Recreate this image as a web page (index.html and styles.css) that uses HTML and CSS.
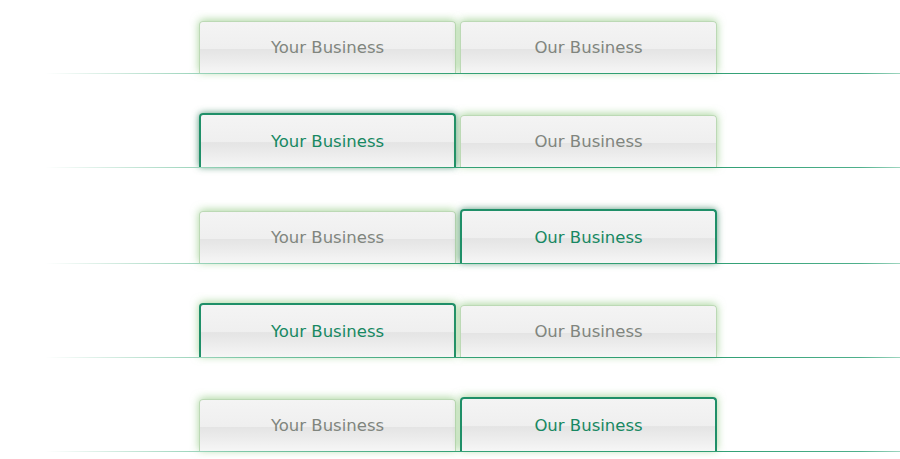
FILE: index.html
```html
<!DOCTYPE html>
<html>
<head>
<meta charset="utf-8">
<link rel="stylesheet" href="styles.css">
</head>
<body>
<div class="stack">
  <div class="row row-first">
    <div class="tabs">
      <div class="tab">Your Business</div>
      <div class="tab">Our Business</div>
    </div>
    <div class="rule"></div>
  </div>
  <div class="row row-a">
    <div class="tabs">
      <div class="tab active dark">Your Business</div>
      <div class="tab">Our Business</div>
    </div>
    <div class="rule"></div>
  </div>
  <div class="row row-b">
    <div class="tabs">
      <div class="tab">Your Business</div>
      <div class="tab active dark">Our Business</div>
    </div>
    <div class="rule"></div>
  </div>
  <div class="row row-a">
    <div class="tabs">
      <div class="tab active light">Your Business</div>
      <div class="tab">Our Business</div>
    </div>
    <div class="rule"></div>
  </div>
  <div class="row row-a">
    <div class="tabs">
      <div class="tab">Your Business</div>
      <div class="tab active light">Our Business</div>
    </div>
    <div class="rule"></div>
  </div>
</div>
</body>
</html>
```
FILE: styles.css
```css
html, body {
  margin: 0;
  padding: 0;
  background: #ffffff;
}
body {
  width: 900px;
  height: 459px;
  overflow: hidden;
  font-family: "DejaVu Sans", "Liberation Sans", sans-serif;
}
.stack {
  display: flex;
  flex-direction: column;
}
.row {
  display: flex;
  flex-direction: column;
  justify-content: flex-end;
}
.row-first { height: 74px; }
.row-a { height: 94px; }
.row-b { height: 96px; }
.tabs {
  display: flex;
  align-items: flex-end;
  gap: 4px;
  padding-left: 199px;
  height: 54px;
}
.tab {
  box-sizing: border-box;
  width: 257px;
  height: 52px;
  padding-top: 1px;
  border: 1px solid #bcd9b5;
  border-bottom: none;
  border-radius: 4px 4px 0 0;
  background: linear-gradient(to bottom, #f4f4f4 0%, #efefef 52%, #e4e4e4 53%, #ececec 75%, #f6f6f6 100%);
  box-shadow: 0 -1px 8px rgba(110, 185, 90, 0.6);
  color: #80857e;
  font-size: 16.5px;
  text-align: center;
  line-height: 50px;
}
.tab.active {
  height: 54px;
  border: 2px solid #1f8f68;
  border-bottom: none;
  color: #178862;
  line-height: 52px;
}
.tab.dark {
  box-shadow: 0 0 7px rgba(15, 105, 65, 0.7);
}
.tab.light {
  box-shadow: 0 -1px 8px rgba(110, 185, 90, 0.6);
}
.rule {
  height: 1px;
  background: linear-gradient(to right, rgba(255,255,255,0) 0px, rgba(255,255,255,0) 45px, #cfeade 120px, #7fc8a8 240px, #34a176 450px, #2e9d72 700px, #4fb08c 860px, #9fd6c0 900px);
}
```
